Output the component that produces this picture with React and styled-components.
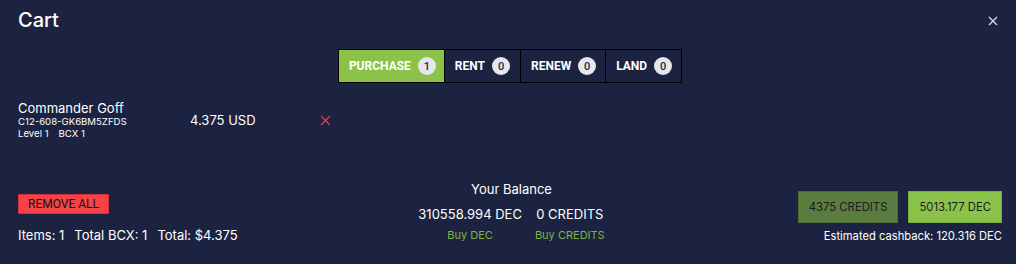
import React from "react";
import styled, { createGlobalStyle } from "styled-components";

const GlobalStyle = createGlobalStyle`
  html, body {
    margin: 0;
    padding: 0;
    background: #1c2340;
  }
  body {
    font-family: Inter, "Noto Sans", sans-serif;
    color: #ffffff;
  }
`;

const Modal = styled.div`
  width: 1016px;
  height: 264px;
  box-sizing: border-box;
  padding: 8px 14px 0 18px;
  background: #1c2340;
  display: flex;
  flex-direction: column;
`;

const Header = styled.div`
  display: flex;
  justify-content: space-between;
  align-items: center;
  height: 24px;
`;

const Title = styled.h2`
  margin: 0;
  font-size: 20px;
  font-weight: 500;
  line-height: 24px;
`;

const Close = styled.button`
  background: none;
  border: none;
  padding: 0;
  width: 12px;
  height: 12px;
  margin-right: 3px;
  margin-top: 1px;
  display: flex;
  align-items: center;
  justify-content: center;
  cursor: pointer;
`;

const Tabs = styled.div`
  display: flex;
  justify-content: center;
  margin-top: 17px;
`;

const Tab = styled.div`
  height: 34px;
  box-sizing: border-box;
  border: 1px solid #000;
  margin-left: ${(p) => (p.$first ? "0" : "-1px")};
  padding: 0 ${(p) => p.$pr}px 0 ${(p) => p.$pl}px;
  background: ${(p) => (p.$active ? "#8bc34a" : "#1c2340")};
  display: flex;
  align-items: center;
  gap: 7px;
  font-family: Roboto, sans-serif;
  font-weight: 700;
  font-size: 12px;
  color: #fff;
`;

const Badge = styled.span`
  width: 18px;
  height: 18px;
  border-radius: 50%;
  background: #e6e7ec;
  color: #1c2340;
  font-family: Roboto, sans-serif;
  font-weight: 500;
  font-size: 11px;
  display: flex;
  align-items: center;
  justify-content: center;
`;

const Item = styled.div`
  display: flex;
  align-items: center;
  margin-top: 17px;
`;

const ItemInfo = styled.div`
  width: 172px;
  display: flex;
  flex-direction: column;
`;

const ItemName = styled.div`
  font-size: 13px;
  line-height: 16px;
`;

const ItemSub = styled.div`
  font-size: 9.6px;
  line-height: 12px;
  display: flex;
  gap: 10px;
`;

const Price = styled.div`
  width: 130px;
  font-size: 13px;
`;

const RemoveX = styled.span`
  display: flex;
  margin-top: 1px;
`;

const Footer = styled.div`
  display: flex;
  justify-content: space-between;
  align-items: flex-start;
  margin-top: 41px;
`;

const LeftCol = styled.div`
  display: flex;
  flex-direction: column;
  padding-top: 13px;
  width: 330px;
`;

const RemoveAll = styled.button`
  align-self: flex-start;
  height: 20px;
  padding: 0 9px;
  background: #f44346;
  border: 1px solid #d32f37;
  font-family: Roboto, sans-serif;
  font-size: 12px;
  color: #111;
  cursor: pointer;
`;

const Totals = styled.div`
  margin-top: 13px;
  font-size: 13px;
  line-height: 16px;
  display: flex;
  gap: 10px;
`;

const CenterCol = styled.div`
  display: flex;
  flex-direction: column;
  align-items: center;
  margin-left: 3px;
`;

const BalanceTitle = styled.div`
  font-size: 13px;
  line-height: 16px;
`;

const BalanceRow = styled.div`
  display: flex;
  gap: 13px;
  margin-top: 9px;
`;

const Balance = styled.div`
  display: flex;
  flex-direction: column;
  align-items: center;
  gap: 7px;
`;

const Amount = styled.span`
  font-size: 13px;
  line-height: 16px;
`;

const BuyLink = styled.a`
  color: #7cb342;
  font-size: 11px;
  line-height: 13px;
  text-decoration: none;
  cursor: pointer;
`;

const RightCol = styled.div`
  width: 330px;
  display: flex;
  flex-direction: column;
  align-items: flex-end;
  padding-top: 10px;
`;

const PayRow = styled.div`
  display: flex;
  gap: 10px;
`;

const PayButton = styled.button`
  height: 32px;
  padding: 0 10px;
  background: ${(p) => (p.$dark ? "#5a7c3f" : "#8bc34a")};
  border: 1px solid ${(p) => (p.$dark ? "#4c6a34" : "#7aab3e")};
  font-family: Inter, sans-serif;
  font-size: 11.3px;
  color: #1b1b1b;
  cursor: pointer;
`;

const Cashback = styled.div`
  margin-top: 6px;
  font-size: 11.2px;
  line-height: 14px;
`;

const tabs = [
  { label: "PURCHASE", count: 1, active: true, pl: 10, pr: 8 },
  { label: "RENT", count: 0, pl: 10, pr: 10 },
  { label: "RENEW", count: 0, pl: 10, pr: 9 },
  { label: "LAND", count: 0, pl: 10, pr: 9 },
];

export default function App() {
  return (
    <>
      <GlobalStyle />
      <Modal>
        <Header>
          <Title>Cart</Title>
          <Close aria-label="close">
            <svg width="10" height="10" viewBox="0 0 10 10">
              <path d="M1 1L9 9M9 1L1 9" stroke="#d5d8e2" strokeWidth="1.4" />
            </svg>
          </Close>
        </Header>

        <Tabs>
          {tabs.map((t, i) => (
            <Tab key={t.label} $active={t.active} $first={i === 0} $pl={t.pl} $pr={t.pr}>
              {t.label}
              <Badge>{t.count}</Badge>
            </Tab>
          ))}
        </Tabs>

        <Item>
          <ItemInfo>
            <ItemName>Commander Goff</ItemName>
            <ItemSub>C12-608-GK6BM5ZFDS</ItemSub>
            <ItemSub>
              <span>Level 1</span>
              <span>BCX 1</span>
            </ItemSub>
          </ItemInfo>
          <Price>4.375 USD</Price>
          <RemoveX>
            <svg width="11" height="11" viewBox="0 0 11 11">
              <path d="M1 1L10 10M10 1L1 10" stroke="#e53946" strokeWidth="1.3" />
            </svg>
          </RemoveX>
        </Item>

        <Footer>
          <LeftCol>
            <RemoveAll>REMOVE ALL</RemoveAll>
            <Totals>
              <span>Items: 1</span>
              <span>Total BCX: 1</span>
              <span>Total: $4.375</span>
            </Totals>
          </LeftCol>

          <CenterCol>
            <BalanceTitle>Your Balance</BalanceTitle>
            <BalanceRow>
              <Balance>
                <Amount>310558.994 DEC</Amount>
                <BuyLink>Buy DEC</BuyLink>
              </Balance>
              <Balance>
                <Amount>0 CREDITS</Amount>
                <BuyLink>Buy CREDITS</BuyLink>
              </Balance>
            </BalanceRow>
          </CenterCol>

          <RightCol>
            <PayRow>
              <PayButton $dark>4375 CREDITS</PayButton>
              <PayButton>5013.177 DEC</PayButton>
            </PayRow>
            <Cashback>Estimated cashback: 120.316 DEC</Cashback>
          </RightCol>
        </Footer>
      </Modal>
    </>
  );
}
